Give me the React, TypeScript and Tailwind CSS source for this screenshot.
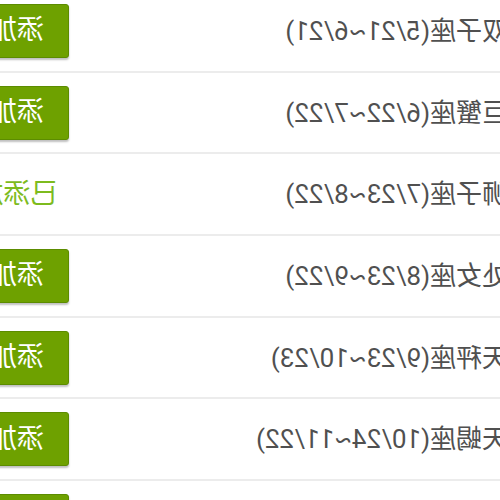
const signs = [
  { name: "双子座(5/21~6/21)", added: false },
  { name: "巨蟹座(6/22~7/22)", added: false },
  { name: "狮子座(7/23~8/22)", added: true },
  { name: "处女座(8/23~9/22)", added: false },
  { name: "天秤座(9/23~10/23)", added: false },
  { name: "天蝎座(10/24~11/22)", added: false },
  { name: "射手座(11/23~12/21)", added: false },
];

export default function App() {
  return (
    <div className="h-[500px] w-[500px] overflow-hidden bg-white -scale-x-100">
      <ul
        className="-ml-[8px] -mt-[9px] w-[546px] font-['Roboto','Noto_Sans_CJK_SC',sans-serif]"
      >
        {signs.map((sign) => (
          <li
            key={sign.name}
            className="flex h-[81.7px] items-center justify-between border-b-2 border-[#ececec] pr-[3px]"
          >
            <span className="text-[26px] leading-none text-[#505050]">{sign.name}</span>
            {sign.added ? (
              <span className="w-[104px] text-center text-[27px] leading-none text-[#7dbb1e]">
                已添加
              </span>
            ) : (
              <button className="flex h-[54px] w-[104px] items-center justify-center rounded-[3px] border border-[#5c8c00] bg-[#6ea100] text-[27px] leading-none text-white shadow-[0_2px_2px_rgba(0,0,0,0.25)]">
                添加
              </button>
            )}
          </li>
        ))}
      </ul>
    </div>
  );
}
